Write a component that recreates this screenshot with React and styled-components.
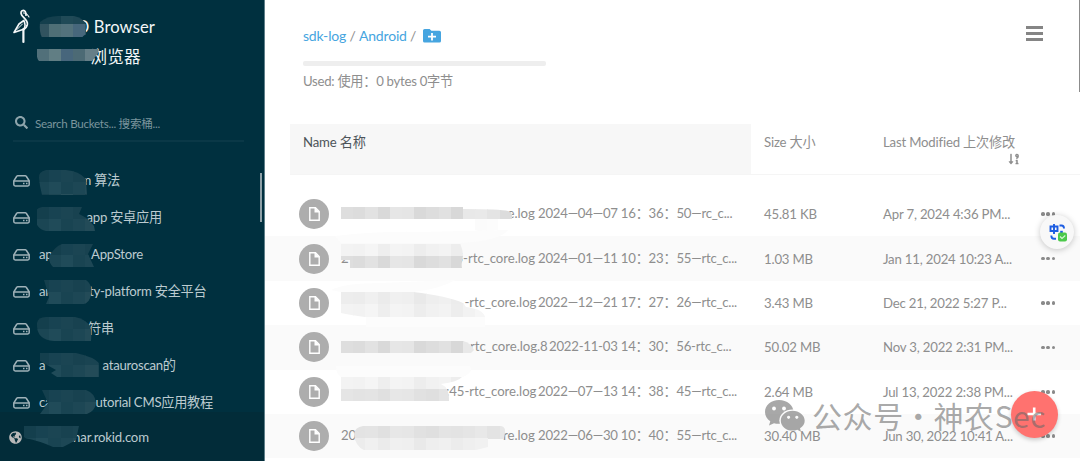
import React, { useId } from "react";
import styled, { createGlobalStyle } from "styled-components";
import { FaSearch, FaGlobeAmericas, FaSortNumericDownAlt } from "react-icons/fa";

const GlobalStyle = createGlobalStyle`
  * {
    box-sizing: border-box;
  }
  body {
    margin: 0;
    overflow: hidden;
    background: #fff;
    font-family: Lato, "Noto Sans CJK SC", sans-serif;
    font-size: 13.2px;
    letter-spacing: -0.19px;
    color: #8e8e8e;
  }
`;

const Page = styled.div`
  display: flex;
  position: relative;
  width: 1080px;
  height: 461px;
  overflow: hidden;
`;

const Sidebar = styled.aside`
  display: flex;
  flex-direction: column;
  position: relative;
  width: 265px;
  height: 461px;
  background: #00303f;
  border-right: 1px solid #5f7f89;
  color: #bccbd0;
`;

const Brand = styled.header`
  display: flex;
  height: 76px;
  padding: 9px 0 0 13px;
`;

const BrandTitle = styled.h1`
  margin: 3px 0 0;
  font-size: 16.6px;
  font-weight: 400;
  line-height: 30px;
  letter-spacing: 0.1px;
  color: #f2f6f7;
`;

const TitleLine = styled.div`
  white-space: nowrap;
  padding-left: ${(p) => p.$indent}px;
`;

const Search = styled.div`
  display: flex;
  align-items: center;
  gap: 7px;
  margin: 31px 20px 0 13px;
  padding: 0 0 2px 2px;
  height: 35px;
  font-size: 11.6px;
  letter-spacing: -0.27px;
  color: #7b959d;
  border-bottom: 2px solid #0a3847;

  svg {
    color: #8ea5ac;
  }
`;

const BucketList = styled.ul`
  list-style: none;
  margin: 20px 0 0;
  padding: 0;
`;

const Bucket = styled.li`
  display: flex;
  align-items: center;
  height: 37px;
  padding-left: 13px;
  white-space: nowrap;
`;

const BucketLabel = styled.span`
  position: relative;
  width: 200px;
  height: 20px;
  margin-left: 9px;
  line-height: 19px;
  letter-spacing: -0.27px;
`;

const Part = styled.span`
  position: absolute;
  left: ${(p) => p.$x}px;
  top: 0;
  white-space: nowrap;
`;

const Host = styled.footer`
  display: flex;
  align-items: center;
  position: absolute;
  left: 0;
  bottom: 0;
  width: 264px;
  height: 49px;
  padding: 1px 0 0 9px;
  background: #022c39;

  svg {
    color: #b9b9b9;
  }
`;

const HostName = styled.span`
  margin-left: 45px;
`;

const SideScroll = styled.div`
  position: absolute;
  right: 2px;
  top: 173px;
  width: 2px;
  height: 49px;
  background: #8ea1a8;
`;

const Main = styled.main`
  position: relative;
  width: 815px;
  height: 461px;
`;

const TopBar = styled.header`
  display: flex;
  justify-content: space-between;
  height: 124px;
  padding: 26px 37px 0 38px;
`;

const Crumbs = styled.div`
  display: flex;
  align-items: center;
  gap: 3.4px;
  height: 20px;
  font-size: 14px;
  line-height: 18px;

  a {
    color: #46a5e0;
  }
  svg {
    margin-left: 3px;
  }
`;

const UsageBar = styled.div`
  width: 243px;
  height: 5px;
  margin: 15px 0 8px;
  border-radius: 2px;
  background: #eee;
`;

const Usage = styled.div`
  line-height: 15px;
  letter-spacing: -0.28px;
`;

const Menu = styled.button`
  display: flex;
  flex-direction: column;
  gap: 3px;
  width: 17px;
  height: 16px;
  padding: 0;
  border: 0;
  background: none;

  span {
    height: 3px;
    width: 17px;
    background: #858585;
  }
`;

const columns = "461px 119px 152px 1fr";

const HeadRow = styled.div`
  display: grid;
  grid-template-columns: ${columns};
  height: 51px;
  margin-left: 25px;
  border-bottom: 1px solid #f5f5f5;
`;

const HeadCell = styled.div`
  padding: 8px 0 0 13px;
  line-height: 20px;
  white-space: nowrap;
  color: ${(p) => (p.$active ? "#4d5459" : "#8e8e8e")};
  background: ${(p) => (p.$active ? "#f7f7f7" : "transparent")};

  svg {
    display: block;
    margin: 1px 0 0 125px;
  }
`;

const Rows = styled.div`
  padding-top: 17px;
`;

const Row = styled.div`
  display: grid;
  grid-template-columns: ${columns};
  align-items: center;
  height: 44.4px;
  padding-left: 25px;
  background: ${(p) => (p.$odd ? "#fafafa" : "#fff")};
`;

const NameCell = styled.div`
  display: flex;
  align-items: center;
  padding-left: 9px;
`;

const FileBadge = styled.span`
  display: flex;
  align-items: center;
  justify-content: center;
  width: 30px;
  height: 30px;
  border-radius: 50%;
  background: #adadad;
`;

const FileName = styled.span`
  position: relative;
  width: 400px;
  height: 20px;
  line-height: 19px;
  margin-left: 12px;
  letter-spacing: -0.04px;
`;

const Stamp = styled(Part)`
  letter-spacing: -0.24px;
`;

const Cell = styled.div`
  padding-left: 13px;
  white-space: nowrap;
`;

const Dots = styled.div`
  display: flex;
  gap: 1.7px;
  padding-left: 19px;

  i {
    width: 3.7px;
    height: 3.7px;
    border-radius: 50%;
    background: #8a8a8a;
  }
`;

const PageScroll = styled.div`
  position: absolute;
  right: 0;
  top: 0;
  width: 1px;
  height: 92px;
  background: #8c8c8c;
`;

const Smudges = styled.svg`
  position: absolute;
  left: 0;
  top: 0;
  pointer-events: none;
`;

const AddButton = styled.button`
  position: absolute;
  left: 1011px;
  top: 391px;
  width: 47px;
  height: 47px;
  padding: 0;
  border: 0;
  border-radius: 50%;
  background: #ff726f;
  box-shadow: 0 2px 4px rgba(0, 0, 0, 0.2);
`;

const Translate = styled.div`
  position: absolute;
  left: 1040px;
  top: 215px;
  width: 34px;
  height: 34px;
  border-radius: 50%;
  background: #f8f8f8;
  box-shadow: 0 1px 6px rgba(0, 0, 0, 0.22);
`;

const Watermark = styled.div`
  display: flex;
  align-items: center;
  position: absolute;
  left: 764px;
  top: 396px;
  height: 40px;
  color: rgba(105, 105, 105, 0.58);
  font-family: "Noto Sans CJK SC", sans-serif;
  font-size: 30px;
  white-space: nowrap;

  span {
    margin: -3px 0 0 6px;
    letter-spacing: 0.6px;
    word-spacing: -7.8px;
  }
`;

function StorkLogo() {
  return (
    <svg width="18" height="35" viewBox="0 0 18 35" fill="none" stroke="#f4f7f8" strokeLinecap="round" strokeLinejoin="round">
      <path d="M13 6.2C13 3 12 1.300 10.300 1.300C7.800 1.500 7.400 4.200 8.800 6.200C10.500 8.800 14.800 11 14.400 15.200C14 18 12.800 19.300 10.500 20.700" strokeWidth="1.700" />
      <path d="M10.200 4C12.500 3.600 14.600 5.500 16 8" strokeWidth="1.100" />
      <path d="M10.800 11.500L6 15L1 23.500L10.500 20.300C12.500 18.500 12.500 14.500 10.800 11.500Z" strokeWidth="1.600" />
      <path d="M4 20.500L9.500 15" strokeWidth="1" />
      <path d="M10.400 20V33" strokeWidth="2.200" />
    </svg>
  );
}

function DriveIcon() {
  return (
    <svg width="17" height="12" viewBox="0 0 17 12" fill="none" stroke="#9fb2b9">
      <path d="M.8 5.800L3.600 1.500Q4 .8 4.800 .8H12.200Q13 .8 13.400 1.500L16.200 5.800V9.600Q16.200 11 14.800 11H2.200Q.8 11 .8 9.600Z" strokeWidth="1.500" />
      <path d="M1 6H16" strokeWidth="1.500" />
      <path d="M10 8.500H11.500M13 8.500H14.500" strokeWidth="1.700" />
    </svg>
  );
}

function FolderPlus() {
  return (
    <svg width="18" height="14" viewBox="0 0 18 14">
      <path d="M1.600 0H6.600L8.400 1.800H16.400Q18 1.800 18 3.300V12Q18 13.500 16.400 13.500H1.600Q0 13.500 0 12V1.500Q0 0 1.600 0Z" fill="#46a5e0" />
      <path d="M5 7.700H13M9 3.900V11.500" stroke="#fff" strokeWidth="1.800" />
    </svg>
  );
}

function FileIcon() {
  return (
    <svg width="11" height="14" viewBox="0 0 11 14" fill="none" stroke="#fff" strokeWidth="1.400">
      <path d="M.8 .8H6.500L10.200 4.500V13.200H.8Z" />
      <path d="M6.200 .8V4.900H10.200" fill="#fff" />
    </svg>
  );
}

function TranslateIcon() {
  return (
    <svg width="34" height="34" viewBox="0 0 34 34" fill="none" stroke="#1d5de2" strokeWidth="1.900">
      <path d="M10.500 11.500H17.500V16H10.500ZM14 9V19" />
      <path d="M19.500 10.500H21.500Q24 10.500 24 13.500M11.300 20.500Q11.300 23.800 14 23.800H16" />
      <path d="M21.500 15.800V19" strokeWidth="2.600" />
      <rect x="18" y="17.500" width="9" height="9" rx="2" fill="#4cc94b" stroke="none" />
      <path d="M20 21.500L22 23.500L25.300 20.500" stroke="#d8f5d8" strokeWidth="1.100" />
    </svg>
  );
}

function ChatIcon() {
  const id = useId();
  return (
    <svg width="42" height="34" viewBox="0 0 42 34">
      <mask id={id}>
        <rect width="42" height="34" fill="#fff" />
        <ellipse cx="28.500" cy="21.700" rx="13.200" ry="11.200" fill="#000" />
        <circle cx="10" cy="9.500" r="1.900" fill="#000" />
        <circle cx="20" cy="9.500" r="1.900" fill="#000" />
      </mask>
      <g fill="currentColor">
        <path mask={`url(#${id})`} d="M15 1C7 1 1 6.300 1 13C1 17 3 20 6.300 22.200L5 26.500L10 24.200Q13 25.200 17 24.700C24 24 29.500 19 29.500 13C29.500 6.300 23 1 15 1Z" />
        <path fillRule="evenodd" d="M28.500 11.700C21.800 11.700 16.800 16.200 16.800 21.700C16.800 27.200 22 31.600 28.500 31.600Q31 31.600 33.300 30.700L37 32.700L36 29.300C39 27.500 40.700 24.800 40.700 21.700C40.700 16.200 35.200 11.700 28.500 11.700ZM24.600 16.700A1.600 1.600 0 1 1 24.590 16.700ZM32.800 16.700A1.600 1.600 0 1 1 32.790 16.700Z" />
      </g>
    </svg>
  );
}

// Mosaic patch: a blob outline filled with flat cells
function Smudge({ d, x, y, cell = 12.2, rows }) {
  const id = useId();
  return (
    <g>
      <clipPath id={id}>
        <path d={d} />
      </clipPath>
      <g clipPath={`url(#${id})`} shapeRendering="crispEdges">
        {rows.map((row, r) =>
          row.map((fill, c) => (
            <rect key={`${r}-${c}`} x={x + c * cell} y={y + r * cell} width={cell + 0.5} height={cell + 0.5} fill={fill} />
          ))
        )}
      </g>
    </g>
  );
}

const teal = [
  ["#143f4d", "#184352", "#1b4553", "#184250", "#1a4452", "#153f4d", "#123c4a"],
  ["#1b4654", "#204b59", "#194452", "#1d4755", "#234b58", "#1b4553", "#163f4c"],
  ["#153f4d", "#1c4653", "#274f5b", "#1d4552", "#183f4c", "#1b4451", "#143b49"],
];
const grayA = ["#dedede", "#dcdcdc", "#e2e2e2", "#d9d9d9", "#e6e6e6", "#e5e5e5", "#d9d9d9", "#dddddd", "#e1e1e1", "#d8d8d8", "#e8e8e8", "#e9e9e9", "#e4e4e4", "#dcdcdc"];
const grayB = ["#f3f3f3", "#f2f2f2", "#f5f5f5", "#eeeeee", "#f4f4f4", "#f3f3f3", "#ededed", "#f1f1f1", "#f3f3f3", "#ededed", "#f2f2f2", "#f6f6f6", "#f5f5f5", "#f4f4f4"];
const grayC = ["#e5e5e5", "#e3e3e3", "#e4e4e4", "#e0e0e0", "#e7e7e7", "#e6e6e6", "#e1e1e1", "#dfdfdf", "#e4e4e4", "#e3e3e3", "#e5e5e5", "#e8e8e8", "#e3e3e3", "#e7e7e7"];
const grayD = ["#ededed", "#ececec", "#f0f0f0", "#ebebeb", "#f0f0f0", "#efefef", "#e9e9e9", "#eeeeee", "#f0f0f0", "#ececec", "#efefef", "#f1f1f1"];

const smudges = [
  { d: "M40 22Q47 16 58 16H74Q83 18 86 24V34L82 37H42Q39 33 40 22Z", x: 36.500, y: 12, rows: [["#143f4d", "#143f4d", "#204a57", "#1e4755", "#143f4d"], ["#31535f", "#4f6f76", "#53727c", "#47677c", "#315964"], ["#31535f", "#4f6f76", "#53727c", "#47677c", "#315964"]] },
  { d: "M37 49H98Q100 52 96 56L92 61H39Q36 58 37 49Z", x: 36.500, y: 49, rows: [["#51707a", "#617e84", "#47667c", "#4c6a75", "#667f88", "#667f88"]] },
  { d: "M39 178Q38 172 46 170H66Q79 171 86 179L87 195H42L40 186Z", x: 36.500, y: 170, rows: teal },
  { d: "M35 215Q35 208 42 207H82L79 214Q87 217 94 226L95 231H46Q35 229 35 215Z", x: 36.500, y: 207, rows: teal },
  { d: "M49 257Q54 247 62 244H93L88 254L94 267H53Q49 263 49 257Z", x: 48.500, y: 243, rows: teal },
  { d: "M44 280H86Q93 285 91 294Q90 302 84 304H46L49 297Z", x: 36.500, y: 280, rows: teal },
  { d: "M37 323Q38 317 46 317H75Q85 319 90 326Q92 331 91 341H54Q36 340 37 323Z", x: 36.500, y: 317, rows: teal },
  { d: "M40 353H76Q94 357 99 363V377H57L51 373L56 370L40 361Z", x: 36.500, y: 353, rows: teal },
  { d: "M42 390H86Q95 393 96 403Q95 411 87 414H40L48 403Z", x: 36.500, y: 390, rows: teal },
  { d: "M21 426H79L76 440Q69 444 63 447H53Q40 441 25 438Q20 433 21 426Z", x: 24, y: 426, rows: teal },

  { d: "M341 207H463V209Q500 209 508 211Q514 214 514 219H341Z", x: 341, y: 207, rows: [grayA] },
  { d: "M475 219H498V230Q485 233 475 230Z", x: 475, y: 219, rows: [["#fbfbfb", "#fcfcfc"]] },
  { d: "M335 236Q380 231 420 232L508 230Q500 241 460 243H341Z", x: 335, y: 230, cell: 180, rows: [["#fcfcfc"]] },
  { d: "M341 243H460Q463 250 463 256Q461 264 462 268H350V260H341Z", x: 341, y: 243.500, rows: [grayB, grayA] },
  { d: "M331 290Q345 283 380 283L455 280Q440 289 413 292H341Z", x: 330, y: 280, cell: 130, rows: [["#fcfcfc"]] },
  { d: "M341 292H413Q448 296 463 303L466 307Q483 309 485 317H365Q350 315 341 313Z", x: 341, y: 292, rows: [grayD, grayB] },
  { d: "M366 317H485V327H366Z", x: 366, y: 317, cell: 120, rows: [["#fcfcfc"]] },
  { d: "M341 341H463Q471 343 474 350L471 353H341Z", x: 341, y: 341, rows: [grayA] },
  { d: "M336 366H470Q474 372 463 377H341Q336 374 336 366Z", x: 335, y: 366, cell: 140, rows: [["#fcfcfc"]] },
  { d: "M341 377H462Q458 382 441 384Q450 388 449 401H341Z", x: 341, y: 377, rows: [grayB, grayC] },
  { d: "M354 434Q355 427 363 426H501Q506 427 505 433Q504 444 496 445L476 450H364Q355 446 354 434Z", x: 341, y: 426, rows: [grayC, grayD] },
];

const buckets = [
  [{ x: 41.5, text: "m 算法" }],
  [{ x: 47.5, text: "app 安卓应用" }],
  [{ x: 0, text: "ap" }, { x: 52, text: "AppStore" }],
  [{ x: 0, text: "an" }, { x: 50, text: "ty-platform 安全平台" }],
  [{ x: 49, text: "符串" }],
  [{ x: 0, text: "a" }, { x: 63.5, text: "atauroscan的" }],
  [{ x: 0, text: "ca" }, { x: 56.5, text: "utorial CMS应用教程" }],
];

const files = [
  { head: "", x: 166.5, name: "e.log", at: 197, stamp: "2024—04—07 16：36：50—rc_c...", size: "45.81 KB", date: "Apr 7, 2024 4:36 PM..." },
  { head: "2", x: 114.5, name: "5-rtc_core.log", at: 197, stamp: "2024—01—11 10：23：55—rtc_c...", size: "1.03 MB", date: "Jan 11, 2024 10:23 A..." },
  { head: "", x: 123.5, name: "-rtc_core.log", at: 197, stamp: "2022—12—21 17：27：26—rtc_c...", size: "3.43 MB", date: "Dec 21, 2022 5:27 P..." },
  { head: "", x: 129, name: "rtc_core.log.8", at: 208, stamp: "2022-11-03 14：30：56-rtc_c...", size: "50.02 MB", date: "Nov 3, 2022 2:31 PM..." },
  { head: "", x: 105, name: ":45-rtc_core.log", at: 197, stamp: "2022—07—13 14：38：45—rtc_c...", size: "2.64 MB", date: "Jul 13, 2022 2:38 PM..." },
  { head: "20", x: 162, name: "re.log", at: 197, stamp: "2022—06—30 10：40：55—rtc_c...", size: "30.40 MB", date: "Jun 30, 2022 10:41 A..." },
];

function FileRow({ file, odd }) {
  return (
    <Row $odd={odd}>
      <NameCell>
        <FileBadge>
          <FileIcon />
        </FileBadge>
        <FileName>
          {file.head && <Part $x={0}>{file.head}</Part>}
          <Part $x={file.x}>{file.name}</Part>
          <Stamp $x={file.at}>{file.stamp}</Stamp>
        </FileName>
      </NameCell>
      <Cell>{file.size}</Cell>
      <Cell>{file.date}</Cell>
      <Dots>
        <i />
        <i />
        <i />
      </Dots>
    </Row>
  );
}

function App() {
  return (
    <Page>
      <GlobalStyle />
      <Sidebar>
        <Brand>
          <StorkLogo />
          <BrandTitle>
            <TitleLine $indent={45}>O Browser</TitleLine>
            <TitleLine $indent={59.5}>浏览器</TitleLine>
          </BrandTitle>
        </Brand>
        <Search>
          <FaSearch size={13} />
          Search Buckets... 搜索桶...
        </Search>
        <BucketList>
          {buckets.map((parts, i) => (
            <Bucket key={i}>
              <DriveIcon />
              <BucketLabel>
                {parts.map((p) => (
                  <Part key={p.text} $x={p.x}>{p.text}</Part>
                ))}
              </BucketLabel>
            </Bucket>
          ))}
        </BucketList>
        <SideScroll />
        <Host>
          <FaGlobeAmericas size={13} />
          <HostName>char.rokid.com</HostName>
        </Host>
      </Sidebar>
      <Main>
        <TopBar>
          <div>
            <Crumbs>
              <a>sdk-log</a>/<a>Android</a>/<FolderPlus />
            </Crumbs>
            <UsageBar />
            <Usage>Used: 使用：0 bytes 0字节</Usage>
          </div>
          <Menu>
            <span />
            <span />
            <span />
          </Menu>
        </TopBar>
        <HeadRow>
          <HeadCell $active>Name 名称</HeadCell>
          <HeadCell>Size 大小</HeadCell>
          <HeadCell>
            Last Modified 上次修改
            <FaSortNumericDownAlt size={12} />
          </HeadCell>
        </HeadRow>
        <Rows>
          {files.map((file, i) => (
            <FileRow key={file.date} file={file} odd={i % 2 === 1} />
          ))}
        </Rows>
      </Main>
      <Smudges width="1080" height="461">
        {smudges.map((s) => (
          <Smudge key={s.d} {...s} />
        ))}
      </Smudges>
      <Translate>
        <TranslateIcon />
      </Translate>
      <AddButton>
        <svg width="47" height="47" viewBox="0 0 47 47">
          <path d="M16.500 23H30M23.200 16.500V29.500" stroke="#fff" strokeWidth="2.600" />
        </svg>
      </AddButton>
      <Watermark>
        <ChatIcon />
        <span>公众号 · 神农Sec</span>
      </Watermark>
      <PageScroll />
    </Page>
  );
}

export default App;
